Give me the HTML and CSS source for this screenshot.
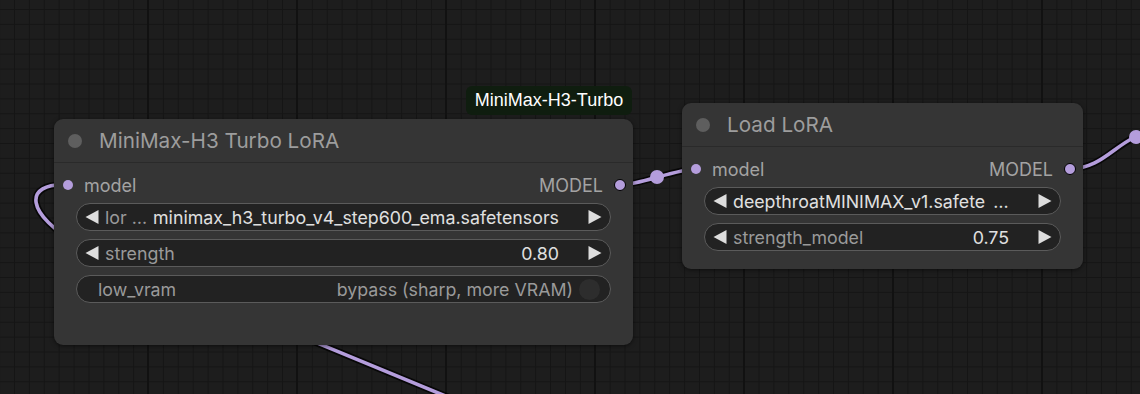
FILE: index.html
```html
<!DOCTYPE html>
<html>
<head>
    <title>LoRA nodes</title>
    <link rel="stylesheet" href="styles.css">
</head>
<body>
    <div class="canvas">
        <svg class="wires" width="1140" height="394" viewBox="0 0 1140 394">
            <g class="wire-shadow">
                <path d="M 68 185 C 22 182, 25 215, 80 245 L 460 402"/>
                <path d="M 620 185 C 639 185, 677 169, 696 169"/>
                <path d="M 1070 169 C 1100 168, 1112 148, 1135 137 C 1160 125, 1180 120, 1200 118"/>
            </g>
            <g class="wire">
                <path d="M 68 185 C 22 182, 25 215, 80 245 L 460 402"/>
                <path d="M 620 185 C 639 185, 677 169, 696 169"/>
                <path d="M 1070 169 C 1100 168, 1112 148, 1135 137 C 1160 125, 1180 120, 1200 118"/>
            </g>
            <circle class="link-dot" cx="657" cy="177" r="7"/>
            <circle class="link-dot" cx="1136" cy="137" r="7"/>
        </svg>

        <div class="badge">MiniMax-H3-Turbo</div>

        <div class="node node-turbo">
            <div class="node-title">
                <span class="title-dot"></span>
                <span>MiniMax-H3 Turbo LoRA</span>
            </div>
            <div class="node-body">
                <div class="slot-row">
                    <span class="slot in"></span>
                    <span class="slot-name">model</span>
                    <span class="spacer"></span>
                    <span class="slot-name">MODEL</span>
                    <span class="slot out"></span>
                </div>
                <div class="widget">
                    <svg class="arrow" viewBox="0 0 14 14"><polygon points="0.5,7 13.5,0 13.5,14"/></svg>
                    <span class="w-label">lor …</span>
                    <span class="spacer"></span>
                    <span class="w-value">minimax_h3_turbo_v4_step600_ema.safetensors</span>
                    <svg class="arrow" viewBox="0 0 14 14"><polygon points="13.5,7 0.5,0 0.5,14"/></svg>
                </div>
                <div class="widget">
                    <svg class="arrow" viewBox="0 0 14 14"><polygon points="0.5,7 13.5,0 13.5,14"/></svg>
                    <span class="w-label">strength</span>
                    <span class="spacer"></span>
                    <span class="w-value">0.80</span>
                    <svg class="arrow" viewBox="0 0 14 14"><polygon points="13.5,7 0.5,0 0.5,14"/></svg>
                </div>
                <div class="widget toggle">
                    <span class="w-label">low_vram</span>
                    <span class="spacer"></span>
                    <span class="w-label">bypass (sharp, more VRAM)</span>
                    <span class="knob"></span>
                </div>
            </div>
        </div>

        <div class="node node-lora">
            <div class="node-title">
                <span class="title-dot"></span>
                <span>Load LoRA</span>
            </div>
            <div class="node-body">
                <div class="slot-row">
                    <span class="slot in"></span>
                    <span class="slot-name">model</span>
                    <span class="spacer"></span>
                    <span class="slot-name">MODEL</span>
                    <span class="slot out"></span>
                </div>
                <div class="widget">
                    <svg class="arrow" viewBox="0 0 14 14"><polygon points="0.5,7 13.5,0 13.5,14"/></svg>
                    <span class="w-value first">deepthroatMINIMAX_v1.safete</span>
                    <span class="w-value dots">…</span>
                    <span class="spacer"></span>
                    <svg class="arrow" viewBox="0 0 14 14"><polygon points="13.5,7 0.5,0 0.5,14"/></svg>
                </div>
                <div class="widget">
                    <svg class="arrow" viewBox="0 0 14 14"><polygon points="0.5,7 13.5,0 13.5,14"/></svg>
                    <span class="w-label">strength_model</span>
                    <span class="spacer"></span>
                    <span class="w-value">0.75</span>
                    <svg class="arrow" viewBox="0 0 14 14"><polygon points="13.5,7 0.5,0 0.5,14"/></svg>
                </div>
            </div>
        </div>
    </div>
</body>
</html>
```

FILE: styles.css
```css
* {
    margin: 0;
    box-sizing: border-box;
}
body {
    background-color: #1c1c1c;
    overflow: hidden;
}
.canvas {
    position: relative;
    width: 1140px;
    height: 394px;
    overflow: hidden;
    background-color: #1d1d1d;
    background-image:
        linear-gradient(90deg, #111111 0 2px, transparent 2px),
        linear-gradient(90deg, #151515 0 1px, transparent 1px),
        linear-gradient(180deg, #151515 0 1px, transparent 1px);
    background-size: 149px 100%, 14.9px 100%, 100% 14.9px;
    background-position: 147px 0, 14px 0, 0 9px;
    font-family: Inter, "Noto Sans", sans-serif;
}

/* links */
.wires {
    position: absolute;
    left: 0;
    top: 0;
}
.wire-shadow path {
    fill: none;
    stroke: rgba(0, 0, 0, 0.75);
    stroke-width: 7;
}
.wire path {
    fill: none;
    stroke: #b49ddc;
    stroke-width: 3.6;
}
.link-dot {
    fill: #b49ddc;
}

.badge {
    position: absolute;
    left: 466px;
    top: 86px;
    width: 166px;
    height: 29px;
    border-radius: 6px;
    background-color: #0f1d0f;
    color: #ffffff;
    font-family: "Liberation Sans", Arial, sans-serif;
    font-size: 18px;
    display: flex;
    align-items: center;
    justify-content: center;
}

/* nodes */
.node {
    position: absolute;
    background-color: #353535;
    border-radius: 9px;
    box-shadow: 0 1px 4px rgba(0, 0, 0, 0.55);
}
.node-turbo {
    left: 54px;
    top: 119px;
    width: 579px;
    height: 226px;
}
.node-lora {
    left: 682px;
    top: 103px;
    width: 401px;
    height: 166px;
}
.node-title {
    height: 44px;
    display: flex;
    align-items: center;
    gap: 17px;
    padding-left: 14px;
    border-bottom: 1px solid #2a2a2a;
    color: #9d9d9d;
    font-size: 20.7px;
}
.title-dot {
    width: 14px;
    height: 14px;
    border-radius: 50%;
    background-color: #5e5e5e;
}
.node-body {
    padding: 10px 22px 0 22px;
    display: flex;
    flex-direction: column;
    gap: 8px;
}
.slot-row {
    height: 24px;
    margin: 0 -14px -2px -13px;
    display: flex;
    align-items: center;
    gap: 11px;
    color: #a3a3a3;
    font-size: 18px;
}
.spacer {
    flex: 1;
}
.slot {
    width: 10px;
    height: 10px;
    border-radius: 50%;
    background-color: #b49ddc;
}
.slot.out {
    width: 12px;
    height: 12px;
    border: 1.5px solid #000;
    margin-right: -1px;
}

/* widgets */
.widget {
    height: 28px;
    border: 1px solid #5b5b5b;
    border-radius: 14px;
    background-color: #222222;
    display: flex;
    align-items: center;
    padding: 0 8px;
    font-size: 17.8px;
    white-space: nowrap;
}
.arrow {
    width: 14px;
    height: 14px;
    fill: #dddddd;
    flex: none;
}
.w-label {
    color: #9a9a9a;
    margin-left: 6px;
}
.w-value {
    color: #e0e0e0;
    margin-right: 29px;
}
.w-value.first {
    margin-left: 6px;
    margin-right: 0;
}
.w-value.dots {
    margin-left: 8px;
    margin-right: 0;
}
.toggle {
    padding: 0 10px 0 15px;
}
.knob {
    width: 21px;
    height: 21px;
    border-radius: 50%;
    background-color: #2d2d2d;
    margin-left: 6px;
}
```
